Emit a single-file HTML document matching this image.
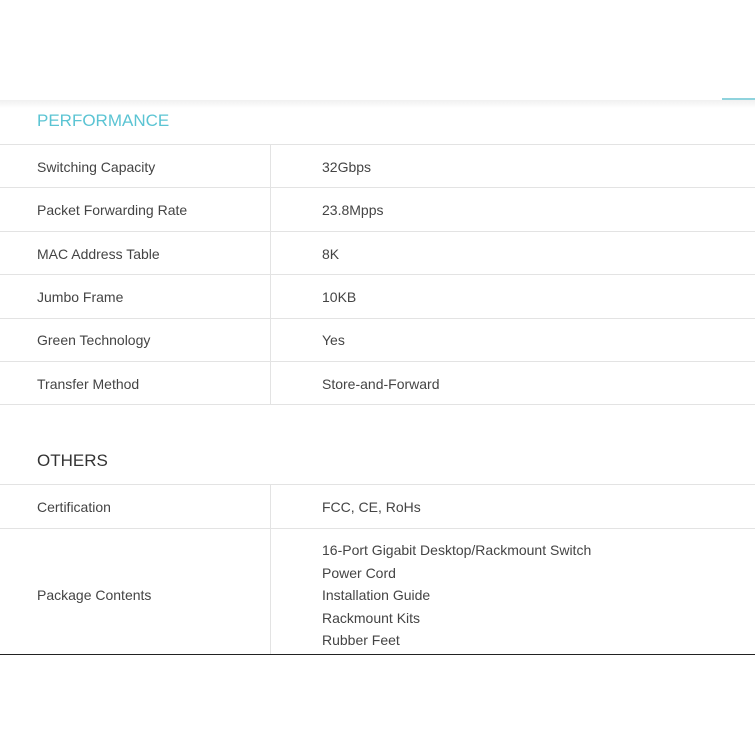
<!DOCTYPE html>
<html><head><style>
body{margin:0;width:755px;height:755px;background:#fff;font-family:"Liberation Sans",sans-serif;position:relative;overflow:hidden;color:#444}
.shadow{position:absolute;left:0;top:100px;width:755px;height:8px;background:linear-gradient(#f0f0f0,#fff)}
.tl{position:absolute;left:722px;top:98px;width:33px;height:2px;background:#8fd3dd}
.t{position:absolute;left:37px;font-size:17px}
.row{position:absolute;left:0;width:755px;border-top:1px solid #e3e3e3;font-size:14px}
.row .a{position:absolute;left:37px}
.row .b{position:absolute;left:322px}
.row .d{position:absolute;left:270px;top:0;bottom:0;width:1px;background:#e3e3e3}
</style></head><body>
<div class="shadow"></div><div class="tl"></div>
<div class="t" style="top:111px;color:#5bc4d3">PERFORMANCE</div>
<div class="row" style="top:144px;height:43px"><div class="d"></div><div class="a" style="top:14px">Switching Capacity</div><div class="b" style="top:14px">32Gbps</div></div>
<div class="row" style="top:187px;height:44px"><div class="d"></div><div class="a" style="top:14px">Packet Forwarding Rate</div><div class="b" style="top:14px">23.8Mpps</div></div>
<div class="row" style="top:231px;height:43px"><div class="d"></div><div class="a" style="top:14px">MAC Address Table</div><div class="b" style="top:14px">8K</div></div>
<div class="row" style="top:274px;height:44px"><div class="d"></div><div class="a" style="top:14px">Jumbo Frame</div><div class="b" style="top:14px">10KB</div></div>
<div class="row" style="top:318px;height:43px"><div class="d"></div><div class="a" style="top:13px">Green Technology</div><div class="b" style="top:13px">Yes</div></div>
<div class="row" style="top:361px;height:43px"><div class="d"></div><div class="a" style="top:14px">Transfer Method</div><div class="b" style="top:14px">Store-and-Forward</div></div>
<div class="row" style="top:404px;height:0"></div>
<div class="t" style="top:451px;color:#333">OTHERS</div>
<div class="row" style="top:484px;height:44px"><div class="d"></div><div class="a" style="top:14px">Certification</div><div class="b" style="top:14px">FCC, CE, RoHs</div></div>
<div class="row" style="top:528px;height:125px;border-bottom:1px solid #222"><div class="d"></div><div class="a" style="top:58px">Package Contents</div><div class="b" style="top:10px;line-height:22.5px">16-Port Gigabit Desktop/Rackmount Switch<br>Power Cord<br>Installation Guide<br>Rackmount Kits<br>Rubber Feet</div></div>
</body></html>
